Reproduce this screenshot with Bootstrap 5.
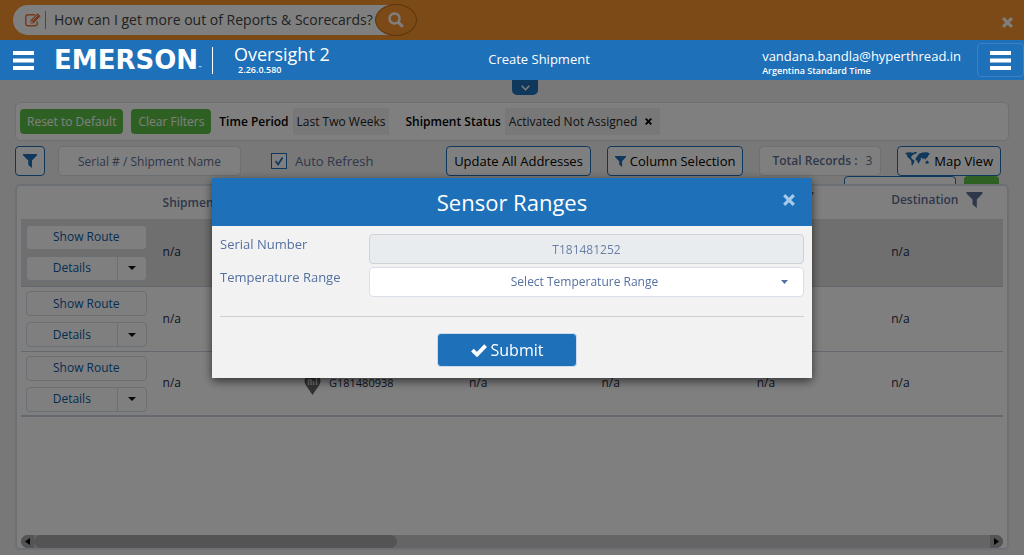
<!DOCTYPE html>
<html lang="en">
<head>
<meta charset="utf-8">
<meta name="viewport" content="width=device-width, initial-scale=1">
<title>Oversight 2 - Sensor Ranges</title>
<link href="https://cdn.jsdelivr.net/npm/bootstrap@5.3.0/dist/css/bootstrap.min.css" rel="stylesheet">
<style>
  :root { --blue: #1e70b8; --orange: #f8942e; --green: #5ec146; --slate: #5f6f94; --line: #d9dfe8; }
  body { font-family: "Open Sans", sans-serif; font-size: 13px; line-height: 18px; color: #222a44; background: #f1f1f1; }
  button, input, select { font-family: inherit; }
  svg { display: block; flex: none; }

  .promo { background: var(--orange); height: 40px; padding: 4px 11px 4px 13px; }
  .promo-pill { height: 30px; padding-left: 12px; border-radius: 15px 0 0 15px; background: #fff; color: #e8743b; }
  .promo-pill input { width: 344px; border: 0; border-left: 1px solid #e8743b; height: 18px; margin-left: 4px; padding: 0 0 0 8px; font-size: 14px; color: #444; background: none; }
  .promo-pill input::placeholder { color: #444; opacity: 1; }
  .promo-go { width: 42px; height: 32px; border: 1px solid #bd6a16; border-radius: 50%; background: var(--orange); color: #fff; margin-left: -14px; }
  .plain { border: 0; padding: 0; background: none; }

  .topbar { position: relative; z-index: 1060; height: 40px; padding-left: 13px; background: var(--blue); color: #fff; }
  .topbar a { color: #fff; text-decoration: none; }
  .brand-logo { font-family: "DejaVu Sans", sans-serif; font-weight: 700; font-size: 26px; line-height: 28px; }
  .brand-logo sub { font-size: 4px; bottom: 0; }
  .product { border-left: 1px solid #fff; height: 27px; padding-left: 21px; margin-left: 10px; }
  .product-name { font-size: 18px; line-height: 20px; margin-top: -3px; }
  .tiny { font-size: 9px; line-height: 12px; font-weight: 600; }
  .center-link { position: absolute; left: 50%; top: 10px; margin-left: 27px; transform: translateX(-50%); line-height: 18px; }
  .menu-btn { width: 47px; height: 34px; border: 1px solid #3a82c4; border-radius: 4px; }
  .pull-tab { width: 26px; height: 15px; margin: 0 auto; position: relative; left: 13px; border-radius: 0 0 5px 5px; background: var(--blue); color: #fff; }

  .page-body { padding: 0 15px 5px; }
  .panel { background: #fff; border: 1px solid var(--line); border-radius: 5px; }
  .filters { height: 39px; margin-top: 7px; padding: 0 4px; font-size: 12px; color: #000; }
  .filters b { font-weight: 600; }
  .btn-go, .btn-go:hover { background: var(--green); color: #fff; height: 25px; padding: 0 7px; border: 0; border-radius: 4px; font-size: 12px; line-height: 18px; }
  .chip { background: #f1f1f1; height: 27px; padding: 0 4px; color: #222; }
  .tools { height: 30px; margin-top: 5px; }
  .tool { height: 30px; border: 1px solid var(--blue); border-radius: 4px; background: #fff; color: #000; font-size: 13px; line-height: 18px; padding: 0 7px; }
  .tool-soft { border-color: var(--line); color: var(--slate); font-size: 12px; }
  .tool-filter { color: var(--blue); }
  .filter-box { width: 183px; margin-left: 13px; }
  .auto-box { margin-left: 30px; color: var(--slate); }
  .tools .form-check-input { width: 16px; height: 16px; margin: 0; border: 1px solid var(--blue); border-radius: 0; background-color: #fff; }
  .tools .form-check-input:checked { background-image: url("data:image/svg+xml,%3csvg xmlns='http://www.w3.org/2000/svg' viewBox='0 0 16 16'%3e%3cpath fill='none' stroke='%231e70b8' stroke-width='2' d='M4 8l3 4 5-8'/%3e%3c/svg%3e"); }
  .second-row { height: 8px; overflow: hidden; padding-right: 10px; }
  .wide-tool { width: 112px; }
  .square-tool { width: 35px; }

  .grid-panel { border-width: 2px; padding: 0 4px; }
  .grid { table-layout: fixed; width: 100%; }
  .grid th { height: 33px; padding: 0 8px; font-size: 12px; font-weight: 600; color: var(--slate); white-space: nowrap; }
  .grid th > div, .grid th > svg { margin-bottom: 5px; }
  .grid td { height: 65px; padding: 0 8px; font-size: 12px; border-bottom: 1px solid #c9d2de; }
  .grid td:first-child { padding: 1px 8px 0 5px; }
  .grid tr.picked td { height: 67px; background: #dedede; }
  .grid tr:last-child td { border-bottom-width: 2px; }
  .serial-no { font-size: 11px; }
  .row-btn, .row-btn:hover { height: 25px; padding: 0; border: 1px solid var(--line); border-radius: 4px; background: #fff; color: #0a5ba8; font-size: 12px; line-height: 18px; }
  .row-actions { gap: 6px; }
  .more-btn { width: 30px; }
  .hbar { height: 13px; border-radius: 7px; background: #cacaca; overflow: hidden; }
  .hbar-end { width: 13px; background: #a8a8a8; }
  .hbar-thumb { width: 37%; border-radius: 7px; background: #a8a8a8; }
  .grid .funnel-col { padding-left: 48px; }

  .modal-backdrop { --bs-backdrop-zindex: 1050; }
  .modal { z-index: 1055; }
  .modal-dialog { max-width: 600px; margin: 178px auto 0; }
  .modal-content { border: 0; border-radius: 0; background: #f2f2f2; color: #5571a0; box-shadow: 0 3px 9px rgba(0,0,0,.6); }
  .modal-header { position: relative; height: 48px; border: 0; border-radius: 0; background: var(--blue); color: #fff; padding: 0; }
  .modal-title { font-size: 22px; line-height: 30px; font-weight: 400; }
  .modal-close { position: absolute; right: 17px; top: 16px; color: #a5c9e8; }
  .modal-body { padding: 8px 8px 11px; }
  .field-label { width: 149px; padding-top: 1px; }
  .field { height: 30px; border: 1px solid var(--line); border-radius: 4px; padding: 0 24px 0 20px; font-size: 12px; line-height: 18px; text-align: center; text-align-last: center; color: #5571a0; }
  .field:disabled { background: #e8ecef; border-color: #cdd2da; padding: 0; color: #6a7fa5; }
  select.field { background-image: url("data:image/svg+xml,%3csvg xmlns='http://www.w3.org/2000/svg' viewBox='0 0 7 4'%3e%3cpath fill='%235571a0' d='M0 0h7L3.500 4z'/%3e%3c/svg%3e"); background-size: 7px 4px; background-position: right 15px center; }
  .field-rows { gap: 3px; }
  .modal-body hr { margin: 19px 0 16px; color: #b4b8c0; opacity: .6; }
  .submit-row { padding-right: 10px; }
  .submit { width: 140px; height: 34px; padding: 0; border: 1px solid #cddcec; border-radius: 4px; background: var(--blue); color: #fff; font-size: 16px; line-height: 22px; }
</style>
</head>
<body class="min-vh-100 d-flex flex-column">

<svg width="0" height="0" class="position-absolute" aria-hidden="true">
  <symbol id="funnel" viewBox="0 0 16 16"><path fill="currentColor" d="M0 0h16v1.500L10.300 7.500V16L6 12.500v-5L0 1.500z"/></symbol>
  <symbol id="cross" viewBox="0 0 12 12"><path stroke="currentColor" stroke-width="3.200" d="M1.200 1.200l9.600 9.600M10.800 1.200L1.200 10.800"/></symbol>
  <symbol id="bars" viewBox="0 0 21 19"><path fill="currentColor" d="M0 0h21v4H0zM0 7.500h21v4H0zM0 15h21v4H0z"/></symbol>
  <symbol id="caret" viewBox="0 0 8 4"><path fill="#111" d="M0 0h8L4 4z"/></symbol>
</svg>

<div class="promo d-flex align-items-center">
  <div class="promo-pill d-flex align-items-center">
    <svg width="16" height="14" viewBox="0 0 16 14" fill="none" stroke="currentColor" stroke-width="1.400"><path d="M10 1.700H3Q.8 1.700.8 4v6.500q0 2.300 2.200 2.300h7q2.300 0 2.300-2.300V8.500"/><path fill="currentColor" stroke="none" d="M5.500 10.500V7.300L12.600.2l3 3-7.100 7.300z"/><path stroke="#fff" stroke-width=".8" d="M7.500 7.500l5-5M6.500 8v1.500H8"/></svg>
    <input type="text" aria-label="Ask a question" placeholder="How can I get more out of Reports &amp; Scorecards?">
  </div>
  <button class="promo-go d-flex align-items-center justify-content-center p-0" aria-label="Search">
    <svg width="16" height="16" viewBox="0 0 16 16" fill="none" stroke="currentColor" stroke-width="2.400"><circle cx="6.500" cy="6.500" r="5"/><path stroke-width="3" d="M10.300 10.300l4.500 4.500"/></svg>
  </button>
  <button class="plain ms-auto mt-1 text-white" aria-label="Dismiss"><svg width="11" height="11"><use href="#cross"/></svg></button>
</div>

<header class="topbar d-flex align-items-center">
  <button class="plain text-white" aria-label="Open menu"><svg width="21" height="19"><use href="#bars"/></svg></button>
  <a href="#" class="brand-logo ms-3 ps-1">EMERSON<sub>™</sub></a>
  <div class="product">
    <div class="product-name">Oversight 2</div>
    <div class="tiny ms-1">2.26.0.580</div>
  </div>
  <a href="#" class="center-link">Create Shipment</a>
  <div class="ms-auto me-3 mt-1">
    <div>vandana.bandla@hyperthread.in</div>
    <div class="tiny">Argentina Standard Time</div>
  </div>
  <button class="plain menu-btn text-white d-flex align-items-center justify-content-center" aria-label="User menu"><svg width="21" height="19"><use href="#bars"/></svg></button>
</header>

<main class="page-body flex-grow-1 d-flex flex-column">
  <button class="plain pull-tab d-flex align-items-center justify-content-center" aria-label="Expand"><svg width="9" height="6" viewBox="0 0 9 6" fill="none" stroke="currentColor" stroke-width="1.500"><path d="M.7.7l3.800 4L8.300.7"/></svg></button>

  <section class="panel filters d-flex align-items-center">
    <button class="btn btn-go">Reset to Default</button>
    <button class="btn btn-go ms-2">Clear Filters</button>
    <b class="ms-2">Time Period</b>
    <span class="chip ms-1 d-flex align-items-center">Last Two Weeks</span>
    <b class="ms-3">Shipment Status</b>
    <span class="chip ms-1 d-flex align-items-center">Activated Not Assigned
      <button class="plain ms-2 me-1" aria-label="Remove filter"><svg width="7" height="7"><use href="#cross"/></svg></button></span>
  </section>

  <section class="tools d-flex align-items-center">
    <button class="tool tool-filter" aria-label="Filter"><svg width="14" height="14"><use href="#funnel"/></svg></button>
    <input class="tool tool-soft filter-box text-center" type="text" aria-label="Serial or shipment name" value="Serial # / Shipment Name">
    <div class="auto-box d-flex align-items-center">
      <input class="form-check-input" type="checkbox" id="auto" checked>
      <label for="auto" class="ms-1 ps-1">Auto Refresh</label>
    </div>
    <div class="ms-auto d-flex gap-3 me-2">
      <button class="tool">Update All Addresses</button>
      <button class="tool d-flex align-items-center"><svg width="11" height="11" class="me-1" style="color:var(--blue)"><use href="#funnel"/></svg>Column Selection</button>
      <div class="tool tool-soft d-flex align-items-center px-2"><b class="fw-semibold ms-1 me-2">Total Records :</b>3</div>
      <button class="tool d-flex align-items-center">
        <svg width="25" height="14" viewBox="0 0 25 14" class="me-1 mb-1" fill="#1e70b8"><path d="M0 1l4-.7 5 .5.5 1.200-2.500 1.500-1 1.500 1 2 2.500 1.500-.5 2-1.500 3H6.700L6.300 9 5 7 2.500 5 2 3zM9 0h3l-1 1.800-1.500.2zM12.500 3.500l2-2 3-1L22 .3l3 1.200-1.500 1.700-1 2-1.500 1.300-.5 1.500-1.200-2-1.300 1.500-1-1.800-1.500.3.500 1.500-1.500 2.500-1.300 2-1-3-1.700-1.500.5-2 1.300-.7zM20.500 9.500l2-1 1.500 2-1 1.200-2.500-.2z"/></svg>Map View</button>
    </div>
  </section>
  <div class="second-row d-flex justify-content-end gap-2">
    <button class="tool wide-tool" aria-label="Export"></button>
    <button class="btn btn-go square-tool" aria-label="Refresh"></button>
  </div>

  <section class="panel grid-panel flex-grow-1 d-flex flex-column">
    <table class="grid">
      <colgroup><col style="width:13.600%"><col style="width:14.400%"><col style="width:16.800%"><col style="width:13.500%"><col style="width:15.800%"><col style="width:13.700%"><col></colgroup>
      <thead><tr><th></th><th>Shipment</th><th></th><th></th><th></th><th class="funnel-col"><svg width="17" height="16"><use href="#funnel"/></svg></th><th><div class="d-flex align-items-center">Destination<svg width="17" height="16" class="ms-2"><use href="#funnel"/></svg></div></th></tr></thead>
      <tbody id="rows"></tbody>
    </table>
    <div class="hbar d-flex mt-auto">
      <div class="hbar-end d-flex align-items-center justify-content-center"><svg width="5" height="7" viewBox="0 0 5 7"><path d="M5 0v7L0 3.500z"/></svg></div>
      <div class="hbar-thumb"></div>
      <div class="hbar-end ms-auto d-flex align-items-center justify-content-center"><svg width="5" height="7" viewBox="0 0 5 7"><path d="M0 0v7l5-3.500z"/></svg></div>
    </div>
  </section>
</main>

<div class="modal-backdrop show"></div>
<div class="modal show d-block" role="dialog" aria-labelledby="dlg-title">
  <div class="modal-dialog">
    <form class="modal-content">
      <div class="modal-header justify-content-center">
        <h1 class="modal-title" id="dlg-title">Sensor Ranges</h1>
        <button type="button" class="plain modal-close" aria-label="Close"><svg width="12" height="12"><use href="#cross"/></svg></button>
      </div>
      <div class="modal-body">
        <div class="field-rows d-flex flex-column">
          <div class="d-flex">
            <label for="serial" class="field-label">Serial Number</label>
            <input id="serial" class="form-control field flex-fill w-auto" value="T181481252" disabled>
          </div>
          <div class="d-flex">
            <label for="range" class="field-label">Temperature Range</label>
            <select id="range" class="form-select field flex-fill w-auto"><option>Select Temperature Range</option></select>
          </div>
        </div>
        <hr>
        <div class="submit-row d-flex justify-content-center">
          <button type="button" class="submit d-flex align-items-center justify-content-center"><svg width="16" height="13" viewBox="0 0 16 13" class="me-1" fill="none" stroke="#fff" stroke-width="3.800"><path d="M1.400 6.200l4.600 4.400 8.600-9"/></svg>Submit</button>
        </div>
      </div>
    </form>
  </div>
</div>

<script>
  const serials = ["T181481252", "", "G181480938"];
  const pin = '<svg width="17" height="23" viewBox="0 0 17 23" class="me-2"><path fill="#666" d="M8.500 23L2 13.500a8 8 0 1 1 13 0z"/><path fill="none" stroke="#ddd" stroke-width="1.500" d="M4.500 13V8h2.500v5M9.500 13V9M12.500 13V6"/></svg>';
  document.getElementById("rows").innerHTML = serials.map((s, i) => `
    <tr class="${i ? "" : "picked"}">
      <td>
        <div class="row-actions d-flex flex-column">
          <button class="btn row-btn">Show Route</button>
          <div class="btn-group"><button class="btn row-btn flex-fill">Details</button><button class="btn row-btn more-btn flex-grow-0 d-flex align-items-center justify-content-center" aria-label="More"><svg width="8" height="4"><use href="#caret"/></svg></button></div>
        </div>
      </td>
      <td>n/a</td>
      <td><div class="serial-no d-flex align-items-center">${pin}${s}</div></td>
      <td>n/a</td><td>n/a</td><td>n/a</td><td>n/a</td>
    </tr>`).join("");
</script>
<script src="https://cdn.jsdelivr.net/npm/bootstrap@5.3.0/dist/js/bootstrap.bundle.min.js"></script>
</body>
</html>
